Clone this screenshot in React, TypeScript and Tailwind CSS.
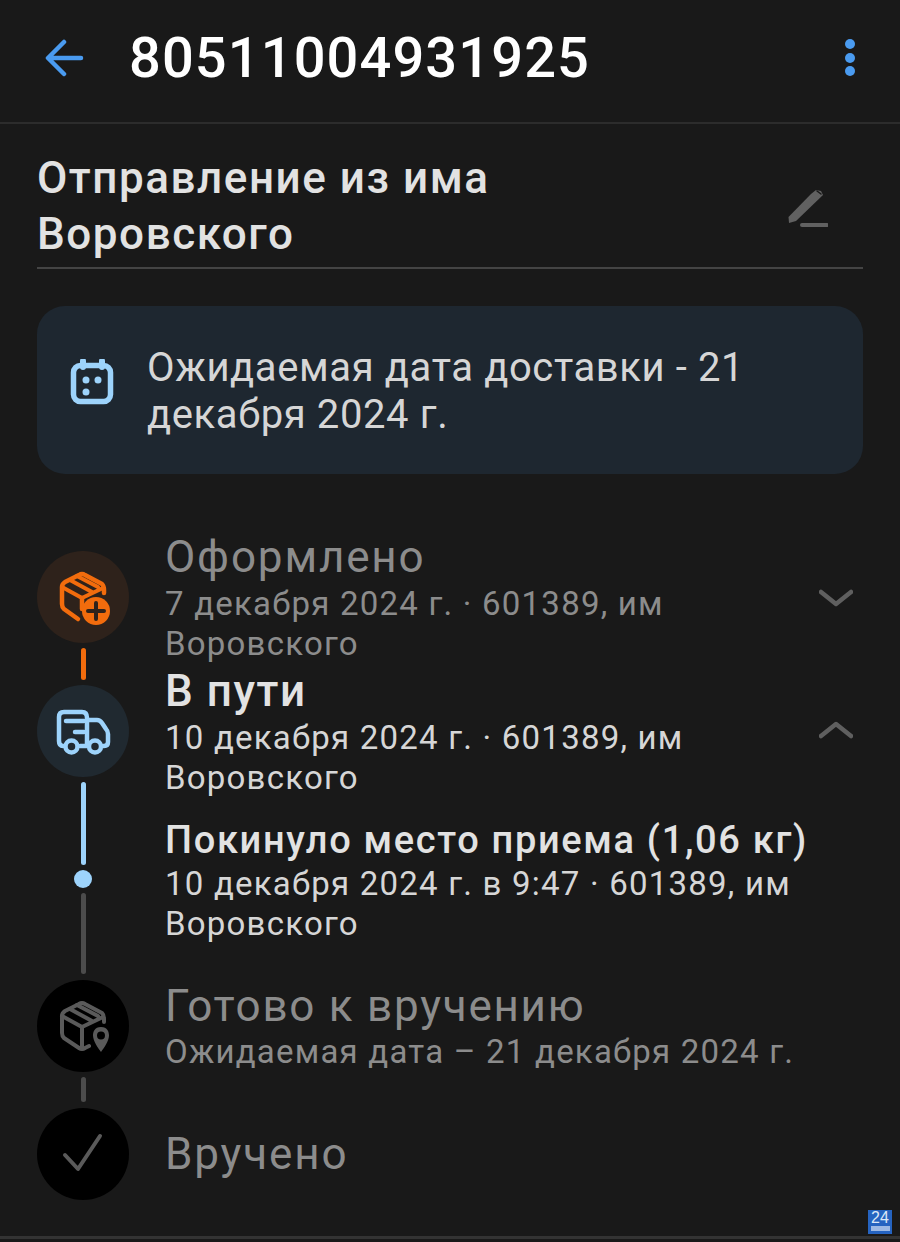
import React from "react";

const font = { fontFamily: "Roboto, 'Noto Sans', sans-serif" };

function BoxPlus() {
  return (
    <svg width="92" height="92" viewBox="0 0 92 92" fill="none" stroke="#f26c0d" strokeWidth="4.500" strokeLinecap="round" strokeLinejoin="round">
      <path d="M25 36 L25 53 Q25 56 27 58 L41 68 M25 36 Q25 33 28 31 L42 24 Q45 22 48 24 L65 33 Q67 35 67 39 V42" />
      <path d="M25 36 L45 47 L66 37 M33 29 L55 41 M40 25 L61 36" strokeWidth="4" />
      <path d="M45 47 V58" />
      <circle cx="59" cy="60" r="14" fill="#f26c0d" stroke="none" />
      <path d="M59 52 V68 M51 60 H67" stroke="#2e221b" strokeWidth="4" />
    </svg>
  );
}

function Truck() {
  return (
    <svg width="92" height="92" viewBox="0 0 92 92" fill="none" stroke="#9dd3fb" strokeWidth="4.500" strokeLinecap="round" strokeLinejoin="round">
      <path d="M27 61 H26 Q22 61 22 56 V32 Q22 27 27 27 H45 Q50 27 50 33 V60 M50 35 H60 Q63 35 65 38 L69 44 Q71 46 71 49 V57 Q71 61 67 61 H66 M43 61 H50" />
      <path d="M29 36 H47 M38 47 H47" />
      <circle cx="34.500" cy="61.500" r="6" />
      <circle cx="58" cy="61.500" r="6" />
    </svg>
  );
}

function BoxPin() {
  return (
    <svg width="92" height="92" viewBox="0 0 92 92" fill="none" stroke="#5a5a5a" strokeWidth="4" strokeLinecap="round" strokeLinejoin="round">
      <path d="M25 36 L25 53 Q25 56 27 58 L42 68 Q45 70 48 68 L52 66 M25 36 Q25 33 28 31 L42 24 Q45 22 48 24 L65 33 Q67 35 67 39 V42" />
      <path d="M25 36 L45 47 L66 37 M33 29 L55 41 M40 25 L61 36 M45 47 V68" />
      <path fillRule="evenodd" fill="#5a5a5a" stroke="none" d="M64 47 C57.5 47 56 52 56 55.5 C56 61 61 68 64 72 C67 68 72 61 72 55.5 C72 52 70.5 47 64 47 Z M64 51.5 A4 4 0 1 1 64 59.5 A4 4 0 1 1 64 51.5 Z" />
    </svg>
  );
}

function Check() {
  return (
    <svg width="92" height="92" viewBox="0 0 92 92" fill="none" stroke="#5a5a5a" strokeWidth="4" strokeLinecap="round" strokeLinejoin="round">
      <path d="M28 47 L41 61 L63 28" />
    </svg>
  );
}

function Chevron({ up }: { up?: boolean }) {
  return (
    <svg width="34" height="20" viewBox="0 0 34 20" fill="none" stroke="#5f5f5f" strokeWidth="4.500" strokeLinecap="round" strokeLinejoin="round">
      <path d={up ? "M2 17 L17 5 L32 17" : "M2 3 L17 15 L32 3"} />
    </svg>
  );
}

export default function App() {
  return (
    <div className="relative flex flex-col h-[1242px] w-[900px] overflow-hidden bg-[#191919]" style={font}>
      {/* Top bar */}
      <header className="flex items-center h-[124px] shrink-0 border-b-2 border-[#2c2c2c] pl-[45px] pr-[44px] pb-[6px]">
        <svg width="40" height="40" viewBox="0 0 40 40" fill="none" stroke="#4a9bf0" strokeWidth="4.500" strokeLinecap="round" strokeLinejoin="round">
          <path d="M36 20 H4 M19 4 L3 20 L19 36" />
        </svg>
        <h1 className="ml-[44px] text-[56px] leading-none font-medium text-white tracking-[1.1px]">80511004931925</h1>
        <svg className="ml-auto" width="12" height="40" viewBox="0 0 12 40" fill="#4a9bf0">
          <circle cx="6" cy="6" r="5" />
          <circle cx="6" cy="20" r="5" />
          <circle cx="6" cy="33" r="5" />
        </svg>
      </header>

      {/* Shipment name */}
      <div className="mx-[37px] mt-[26px] h-[119px] flex items-start justify-between border-b-2 border-[#444444]">
        <p className="text-[44px] leading-[56px] font-medium text-[#e2e2e2] tracking-[1.55px]">
          Отправление из има
          <br />
          Воровского
        </p>
        <svg className="mt-[38px] mr-[35px]" width="42" height="40" viewBox="0 0 42 40" fill="none" stroke="#616161" strokeLinecap="round" strokeLinejoin="round">
          <path d="M3 35 L2.500 29 L25 6 L30 2 L35 3 L37 7 L10 33 Z" fill="#616161" stroke="none" />
          <path d="M31 3 L35 6" stroke="#191919" strokeWidth="1.500" />
          <path d="M16 37 H41" strokeWidth="4" />
        </svg>
      </div>

      {/* Expected delivery notice */}
      <div className="mx-[37px] mt-[37px] h-[168px] rounded-[28px] bg-[#1e2730] flex items-center pl-[33px] pr-[40px]">
        <svg className="shrink-0 -mt-[16px]" width="44" height="46" viewBox="0 0 44 46" fill="none">
          <path d="M13 2 V8 M32 2 V8" stroke="#9dd3fb" strokeWidth="6" strokeLinecap="round" />
          <rect x="3.500" y="6.500" width="37" height="36" rx="7" stroke="#9dd3fb" strokeWidth="5.500" />
          <circle cx="16" cy="21" r="3.500" fill="#9dd3fb" />
          <circle cx="28" cy="21" r="3.500" fill="#9dd3fb" />
          <circle cx="16" cy="33" r="3.500" fill="#9dd3fb" />
        </svg>
        <p className="ml-[33px] mt-[2px] text-[40px] leading-[47px] text-[#d6d6d6] tracking-[0.62px]">
          Ожидаемая дата доставки - 21
          <br />
          декабря 2024 г.
        </p>
      </div>

      {/* Tracking timeline */}
      <div className="ml-[37px] mr-[47px] mt-[77px] flex flex-col">
        <div className="flex h-[134px]">
          <div className="w-[92px] shrink-0 flex flex-col items-center">
            <div className="w-[92px] h-[92px] rounded-full bg-[#2e221b]"><BoxPlus /></div>
            <div className="w-[5px] h-[32px] mt-[5px] rounded-full bg-[#f26c0d]" />
          </div>
          <div className="ml-[36px] -mt-[16px] flex-1 min-w-0">
            <p className="text-[44px] leading-[44px] text-[#8c8c8c] tracking-[1.85px]">Оформлено</p>
            <p className="mt-[5px] text-[33px] leading-[40px] text-[#8c8c8c] tracking-[1.22px] whitespace-nowrap">
              7 декабря 2024 г. · 601389, им
              <br />
              Воровского
            </p>
          </div>
          <div className="mt-[38px]"><Chevron /></div>
        </div>

        <div className="flex h-[295px]">
          <div className="w-[92px] shrink-0 flex flex-col items-center">
            <div className="w-[92px] h-[92px] rounded-full bg-[#202930]"><Truck /></div>
            <div className="w-[5px] h-[83px] mt-[5px] rounded-full bg-[#9dd3fb]" />
            <div className="w-[18px] h-[18px] mt-[5px] rounded-full bg-[#9dd3fb]" />
            <div className="w-[5px] h-[81px] mt-[5px] rounded-full bg-[#4c4c4c]" />
          </div>
          <div className="ml-[36px] -mt-[16px] flex-1 min-w-0">
            <p className="text-[44px] leading-[44px] font-medium text-[#e2e2e2] tracking-[1.55px]">В пути</p>
            <p className="mt-[5px] text-[33px] leading-[40px] text-[#d6d6d6] tracking-[1.22px] whitespace-nowrap">
              10 декабря 2024 г. · 601389, им
              <br />
              Воровского
            </p>
            <p className="mt-[21px] text-[38px] leading-[42px] font-medium text-[#e2e2e2] tracking-[1.67px] whitespace-nowrap">Покинуло место приема (1,06 кг)</p>
            <p className="mt-[3px] text-[33px] leading-[40px] text-[#d6d6d6] tracking-[1.22px] whitespace-nowrap">
              10 декабря 2024 г. в 9:47 · 601389, им
              <br />
              Воровского
            </p>
          </div>
          <div className="mt-[34px]"><Chevron up /></div>
        </div>

        <div className="flex h-[128px]">
          <div className="w-[92px] shrink-0 flex flex-col items-center">
            <div className="w-[92px] h-[92px] rounded-full bg-black"><BoxPin /></div>
            <div className="w-[5px] h-[25px] mt-[5px] rounded-full bg-[#4c4c4c]" />
          </div>
          <div className="ml-[36px] mt-[4px] flex-1 min-w-0">
            <p className="text-[44px] leading-[44px] text-[#8c8c8c] tracking-[1.75px]">Готово к вручению</p>
            <p className="mt-[4px] text-[33px] leading-[40px] text-[#8c8c8c] tracking-[1.22px] whitespace-nowrap">Ожидаемая дата – 21 декабря 2024 г.</p>
          </div>
        </div>

        <div className="flex items-center h-[92px]">
          <div className="w-[92px] h-[92px] shrink-0 rounded-full bg-black"><Check /></div>
          <p className="ml-[36px] text-[44px] leading-[44px] text-[#8c8c8c] tracking-[1.85px]">Вручено</p>
        </div>
      </div>

      <div className="mt-auto mb-[3px] h-[3px] bg-[#333333]" />

      {/* Corner date badge */}
      <div className="absolute left-[868px] top-[1210px] w-[24px] h-[24px] bg-[#2563c0] flex flex-col items-center">
        <span className="text-[16px] leading-[15px] text-[#dbe7f7]" style={{ fontFamily: "'Liberation Sans', sans-serif" }}>24</span>
        <span className="mt-[1px] w-[19px] h-[5px] bg-[#9db9e4]" />
      </div>
    </div>
  );
}
